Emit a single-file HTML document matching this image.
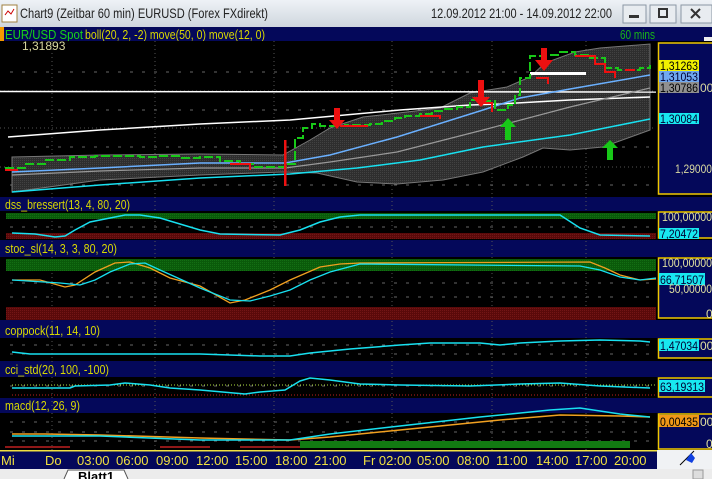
<!DOCTYPE html>
<html><head><meta charset="utf-8"><style>
html,body{margin:0;padding:0;width:712px;height:479px;overflow:hidden;background:#000}
svg{display:block}
text{font-family:"Liberation Sans Narrow","Liberation Sans",sans-serif}
</style></head><body>
<svg width="712" height="479" viewBox="0 0 712 479" xmlns="http://www.w3.org/2000/svg">
<defs>
<linearGradient id="tb" x1="0" y1="0" x2="0" y2="1"><stop offset="0" stop-color="#eef2f6"/><stop offset="1" stop-color="#cfd6de"/></linearGradient>
<pattern id="gdot" width="2" height="2" patternUnits="userSpaceOnUse"><rect width="2" height="2" fill="#0a5a0a"/><rect width="1" height="1" fill="#136e13"/></pattern>
<pattern id="rdot" width="2" height="2" patternUnits="userSpaceOnUse"><rect width="2" height="2" fill="#5a0a0a"/><rect width="1" height="1" fill="#731616"/></pattern>
<pattern id="band" width="2" height="2" patternUnits="userSpaceOnUse"><rect width="2" height="2" fill="#2e2e2e"/><rect width="1" height="1" fill="#424242"/></pattern>
</defs>
<rect x="0" y="0" width="712" height="27" fill="url(#tb)"/>
<rect x="2" y="5" width="15" height="17" fill="#fff" stroke="#a08040"/>
<path d="M5 15 l3 -4 l3 3 l3 -5" stroke="#c00" fill="none"/>
<text x="20" y="18" font-size="14" fill="#222" textLength="248" lengthAdjust="spacingAndGlyphs">Chart9 (Zeitbar 60 min)  EURUSD (Forex FXdirekt)</text>
<text x="431" y="18" font-size="14" fill="#222" textLength="181" lengthAdjust="spacingAndGlyphs">12.09.2012 21:00 - 14.09.2012 22:00</text>
<rect x="623" y="5" width="23" height="18" fill="#e8ecf0" stroke="#8a96a4"/><rect x="629" y="15" width="10" height="3" fill="#333"/>
<rect x="650" y="5" width="26" height="18" fill="#e8ecf0" stroke="#8a96a4"/><rect x="659" y="9" width="8" height="8" fill="none" stroke="#333" stroke-width="2"/>
<rect x="681" y="5" width="31" height="18" fill="#e8ecf0" stroke="#8a96a4"/><path d="M691 9 l9 9 M700 9 l-9 9" stroke="#333" stroke-width="2"/>
<rect x="0" y="27" width="712" height="14" fill="#04085a"/>
<rect x="0" y="27" width="4" height="14" fill="#f39a00"/>
<rect x="704" y="37" width="8" height="4" fill="#eee"/>
<text x="5" y="39" font-size="13" fill="#18d418" textLength="78" lengthAdjust="spacingAndGlyphs">EUR/USD Spot</text>
<text x="85" y="39" font-size="13" fill="#d8d800" textLength="180" lengthAdjust="spacingAndGlyphs">boll(20, 2, -2) move(50, 0) move(12, 0)</text>
<text x="620" y="39" font-size="13" fill="#18b418" textLength="35" lengthAdjust="spacingAndGlyphs">60 mins</text>
<rect x="0" y="41" width="658" height="156" fill="#000"/>
<rect x="0" y="197" width="712" height="14" fill="#04085a"/>
<rect x="0" y="211" width="658" height="29" fill="#000"/>
<rect x="0" y="240" width="712" height="17" fill="#04085a"/>
<rect x="0" y="257" width="658" height="63" fill="#000"/>
<rect x="0" y="320" width="712" height="18" fill="#04085a"/>
<rect x="0" y="338" width="658" height="23" fill="#000"/>
<rect x="0" y="361" width="712" height="16" fill="#04085a"/>
<rect x="0" y="377" width="658" height="21" fill="#000"/>
<rect x="0" y="398" width="712" height="15" fill="#04085a"/>
<rect x="0" y="413" width="658" height="37" fill="#000"/>
<g fill="#04085a" stroke="#f0c800" stroke-width="1.5">
<path d="M712 43 H658.5 V194 H712"/>
<path d="M712 212 H658.5 V238 H712"/>
<path d="M712 258 H658.5 V318 H712"/>
<path d="M712 339 H658.5 V358 H712"/>
<path d="M712 378 H658.5 V397 H712"/>
<path d="M712 414 H658.5 V449 H712"/>
</g>
<g stroke="#555" stroke-dasharray="1 3" stroke-width="1">
<path d="M52 41V450 M155 41V450 M274 41V450 M392 41V450 M492 41V450 M586 41V450"/>
<path d="M0 91H656 M0 128H656 M0 167H656"/>
</g>
<g stroke="#666" stroke-dasharray="3 9"><path d="M10 72H656 M10 110H656 M10 147H656 M10 185H656 M10 227H656 M10 269H656 M10 283H656 M10 297H656 M10 312H656 M10 345H656 M10 354H656 M10 386H656 M10 422H656 M10 432H656 M10 441H656"/></g>
<polygon fill="url(#band)" stroke="#777" points="12,157 100,155 200,154 283,155 310,140 330,128 363,117 407,112 440,108 470,93 507,87 530,77 545,63 575,52 600,48 650,44 650,130 603,147 570,150 543,148 523,157 483,172 443,180 397,184 357,182 317,173 283,172 200,175 100,180 12,192"/>
<polyline fill="none" stroke="#fff" stroke-width="1.5" points="0,91.5 656,92"/>
<polyline fill="none" stroke="#fff" stroke-width="1.5" points="8,137 100,130 200,124 290,120 400,110 470,105 500,104 570,100 650,97"/>
<polyline fill="none" stroke="#6ab0ff" stroke-width="1.5" points="12,172 100,168 200,163 285,163 330,155 397,137 483,110 520,98 570,89 650,75"/>
<polyline fill="none" stroke="#999" stroke-width="1.2" points="12,175 100,171 200,168 285,168 330,162 397,152 483,130 570,107 650,88"/>
<polyline fill="none" stroke="#18e0f0" stroke-width="1.5" points="12,192 100,185 200,178 290,174 357,168 420,160 483,147 570,135 650,119"/>
<rect x="530" y="72" width="56" height="3" fill="#fff"/>
<path fill="none" stroke="#18c818" stroke-width="2" stroke-dasharray="9 3" d="M5 168H25V164H45V160H70V157H95V156H120V156H140V157H160V156H180V158H200V157H220V161H240V164H255V167H270V167H287V164H295V138H303V128H312V124H320V126H345V125H370V124H382V121H395V118H405V116H420V114H432V111H445V109H457V107H470V100H485V101H495V110H508V105H515V95H520V78H530V56H545V55H560V52H575V55H590V58H605V68H618V70H630V70H640V68H650V65"/>
<path fill="none" stroke="#ee1010" stroke-width="2" d="M5 170H18 M230 164H250V170 M340 126H368 M420 116H440V119 M478 103H492V112 M536 78H548V84 M575 56H595V64H605V72H615V78 M625 70H635"/>
<rect x="284" y="140" width="2.5" height="46" fill="#ee1010"/>
<g fill="#ee1010"><path d="M334 108h6v12h5l-8 9l-8-9h5z"/><path d="M478 80h6v17h6l-9 10l-9-10h6z"/><path d="M541 48h6v12h6l-9 11l-9-11h6z"/></g>
<g fill="#18c818"><path d="M508 118l8 9h-5v13h-6v-13h-5z"/><path d="M610 140l8 8h-5v12h-6v-12h-5z"/></g>
<text x="22" y="50" font-size="12" fill="#d8d8a0">1,31893</text>
<g font-size="12">
<rect x="659" y="60" width="40" height="11" fill="#f0f000"/><text x="660" y="70" fill="#000" textLength="38" lengthAdjust="spacingAndGlyphs">1,31263</text>
<rect x="659" y="71" width="40" height="11" fill="#70a8f0"/><text x="660" y="81" fill="#003" textLength="38" lengthAdjust="spacingAndGlyphs">1,31053</text>
<rect x="659" y="82" width="40" height="11" fill="#909090"/><text x="660" y="92" fill="#000" textLength="38" lengthAdjust="spacingAndGlyphs">1,30786</text>
<text x="700" y="92" fill="#d8d8a0">00</text>
<rect x="659" y="113" width="40" height="11" fill="#18e8f0"/><text x="660" y="123" fill="#003" textLength="38" lengthAdjust="spacingAndGlyphs">1,30084</text>
<text x="675" y="173" fill="#d8d8a0" textLength="37" lengthAdjust="spacingAndGlyphs">1,29000</text>
<text x="662" y="221" fill="#e0e0a0" textLength="50" lengthAdjust="spacingAndGlyphs">100,00000</text>
<rect x="659" y="228" width="40" height="11" fill="#18e8f0"/><text x="660" y="238" fill="#003" textLength="38" lengthAdjust="spacingAndGlyphs">7,20472</text>
<text x="662" y="267" fill="#e0e0a0" textLength="50" lengthAdjust="spacingAndGlyphs">100,00000</text>
<rect x="659" y="273" width="46" height="12" fill="#18e8f0"/><text x="660" y="284" fill="#003" textLength="44" lengthAdjust="spacingAndGlyphs">66,71507</text>
<text x="669" y="293" fill="#e0e0a0" textLength="43" lengthAdjust="spacingAndGlyphs">50,00000</text>
<text x="706" y="318" fill="#e0e0a0">0</text>
<rect x="659" y="339" width="40" height="12" fill="#18e8f0"/><text x="660" y="350" fill="#003" textLength="38" lengthAdjust="spacingAndGlyphs">1,47034</text>
<text x="700" y="350" fill="#e0e0a0">00</text>
<rect x="659" y="380" width="46" height="12" fill="#18e8f0"/><text x="660" y="391" fill="#003" textLength="44" lengthAdjust="spacingAndGlyphs">63,19313</text>
<rect x="659" y="415" width="40" height="12" fill="#f09818"/><text x="660" y="426" fill="#000" textLength="38" lengthAdjust="spacingAndGlyphs">0,00435</text>
<text x="700" y="426" fill="#e0e0a0">00</text>
<text x="706" y="448" fill="#e0e0a0">0</text>
</g>
<g font-size="13" fill="#d8d800">
<text x="5" y="209" textLength="125" lengthAdjust="spacingAndGlyphs">dss_bressert(13, 4, 80, 20)</text>
<text x="5" y="253" textLength="112" lengthAdjust="spacingAndGlyphs">stoc_sl(14, 3, 3, 80, 20)</text>
<text x="5" y="335" textLength="95" lengthAdjust="spacingAndGlyphs">coppock(11, 14, 10)</text>
<text x="5" y="374" textLength="104" lengthAdjust="spacingAndGlyphs">cci_std(20, 100, -100)</text>
<text x="5" y="410" textLength="75" lengthAdjust="spacingAndGlyphs">macd(12, 26, 9)</text>
</g>
<rect x="6" y="213" width="650" height="6" fill="url(#gdot)"/>
<rect x="6" y="233" width="650" height="6" fill="url(#rdot)"/>
<polyline fill="none" stroke="#18e0f0" stroke-width="1.5" points="12,233 35,234 55,237 65,236 75,230 90,222 100,220 125,215 140,215 160,218 200,230 220,234 280,235 300,230 320,222 340,217 360,215 560,215 580,228 600,235 650,236"/>
<rect x="6" y="259" width="650" height="12" fill="url(#gdot)"/>
<rect x="6" y="307" width="650" height="13" fill="url(#rdot)"/>
<polyline fill="none" stroke="#f0a020" stroke-width="1.3" points="12,280 40,280 65,287 75,285 95,272 115,263 130,262 150,268 170,278 200,286 230,303 245,300 270,290 290,280 320,267 340,264 360,263 590,262 605,268 620,275 640,280 656,279"/>
<polyline fill="none" stroke="#18e0f0" stroke-width="1.3" points="12,280 60,283 80,285 95,280 110,272 130,264 145,263 160,270 200,288 230,300 250,301 270,296 290,290 310,280 330,272 360,264 580,266 600,270 620,277 640,280 656,278"/>
<polyline fill="none" stroke="#18e0f0" stroke-width="1.5" points="12,352 30,354 100,354 200,354 260,356 290,356 310,353 350,349 400,345 430,343 480,343 500,345 520,343 560,341 600,340 640,341 650,342"/>
<path d="M12 385H656" stroke="#b0e040" stroke-dasharray="1 2"/>
<path d="M12 395H656" stroke="#c02020" stroke-dasharray="1 2"/>
<polyline fill="none" stroke="#18e0f0" stroke-width="1.5" points="12,388 70,388 75,386 110,385 125,383 150,385 170,388 200,390 245,394 260,392 285,390 300,381 310,378 330,380 360,384 400,385 470,386 520,384 560,383 600,386 650,388"/>
<rect x="300" y="441" width="330" height="7" fill="#127a12"/>
<path d="M5 447H70 M160 447H210 M240 447H300" stroke="#c02020" stroke-width="1.5"/>
<polyline fill="none" stroke="#f0a020" stroke-width="1.5" points="12,434 45,434 100,435 200,438 290,440 330,437 400,430 500,420 560,415 620,416 650,417"/>
<polyline fill="none" stroke="#18e0f0" stroke-width="1.5" points="12,436 100,436 200,440 290,440 330,434 400,426 480,417 550,410 580,408 620,414 650,417"/>
<rect x="0" y="450" width="657" height="19" fill="#04085a"/>
<rect x="0" y="450" width="657" height="1.5" fill="#f0e040"/>
<rect x="657" y="450" width="55" height="19" fill="#f0f2f4"/>
<path d="M680 465 L694 451" stroke="#000"/><path d="M686 460 l5 -7 l4 5 l-3 5z" fill="#1040e0"/>
<g font-size="13" fill="#f0e040">
<text x="1" y="465">Mi</text><text x="45" y="465">Do</text>
<text x="77" y="465">03:00</text><text x="116" y="465">06:00</text><text x="156" y="465">09:00</text><text x="196" y="465">12:00</text><text x="235" y="465">15:00</text><text x="275" y="465">18:00</text><text x="314" y="465">21:00</text><text x="363" y="465">Fr 02:00</text><text x="417" y="465">05:00</text><text x="457" y="465">08:00</text><text x="496" y="465">11:00</text><text x="536" y="465">14:00</text><text x="575" y="465">17:00</text><text x="614" y="465">20:00</text>
</g>
<rect x="0" y="469" width="712" height="10" fill="#ececec"/>
<path d="M64 479 L68 470 H124 L128 479" fill="#fff" stroke="#555"/>
<text x="78" y="481" font-size="13" font-weight="bold" fill="#000">Blatt1</text>
<rect x="693" y="470" width="10" height="9" fill="#ddd" stroke="#999"/>
</svg>
</body></html>
